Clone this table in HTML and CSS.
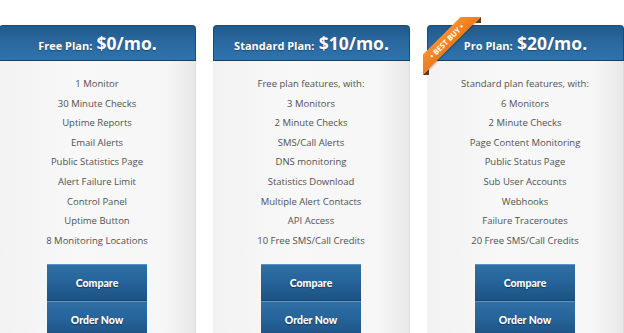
FILE: index.html
```html
<!DOCTYPE html>
<html>
<head>
<meta charset="utf-8">
<link rel="stylesheet" href="styles.css">
</head>
<body>
<div class="plans">
  <div class="plan">
    <div class="plan-head"><span class="name">Free Plan:</span> <span class="price">$0/mo.</span></div>
    <div class="plan-body">
      <ul class="features">
        <li>1 Monitor</li>
        <li>30 Minute Checks</li>
        <li>Uptime Reports</li>
        <li>Email Alerts</li>
        <li>Public Statistics Page</li>
        <li>Alert Failure Limit</li>
        <li>Control Panel</li>
        <li>Uptime Button</li>
        <li>8 Monitoring Locations</li>
      </ul>
      <div class="buttons">
        <a class="btn">Compare</a>
        <a class="btn">Order Now</a>
      </div>
    </div>
  </div>
  <div class="plan">
    <div class="plan-head"><span class="name">Standard Plan:</span> <span class="price">$10/mo.</span></div>
    <div class="plan-body">
      <ul class="features">
        <li>Free plan features, with:</li>
        <li>3 Monitors</li>
        <li>2 Minute Checks</li>
        <li>SMS/Call Alerts</li>
        <li>DNS monitoring</li>
        <li>Statistics Download</li>
        <li>Multiple Alert Contacts</li>
        <li>API Access</li>
        <li>10 Free SMS/Call Credits</li>
      </ul>
      <div class="buttons">
        <a class="btn">Compare</a>
        <a class="btn">Order Now</a>
      </div>
    </div>
  </div>
  <div class="plan">
    <div class="ribbon-wrap"><div class="ribbon">• BEST BUY •</div></div>
    <div class="plan-head"><span class="name">Pro Plan:</span> <span class="price">$20/mo.</span></div>
    <div class="plan-body">
      <ul class="features">
        <li>Standard plan features, with:</li>
        <li>6 Monitors</li>
        <li>2 Minute Checks</li>
        <li>Page Content Monitoring</li>
        <li>Public Status Page</li>
        <li>Sub User Accounts</li>
        <li>Webhooks</li>
        <li>Failure Traceroutes</li>
        <li>20 Free SMS/Call Credits</li>
      </ul>
      <div class="buttons">
        <a class="btn">Compare</a>
        <a class="btn">Order Now</a>
      </div>
    </div>
  </div>
</div>
</body>
</html>
```

FILE: styles.css
```css
html, body {
  margin: 0;
  padding: 0;
  background: #ffffff;
  overflow: hidden;
}
body {
  width: 624px;
  height: 333px;
}
.plans {
  display: flex;
  gap: 17px;
  margin-top: 25px;
  margin-left: -1px;
}
.plan {
  position: relative;
  width: 197px;
  flex: none;
}
.plan-head {
  height: 34px;
  border: 1px solid #1b4a73;
  border-bottom-color: #163f63;
  border-radius: 4px 4px 0 0;
  background: linear-gradient(to bottom, #215a8b 0%, #2a69a0 50%, #2e73ad 100%);
  color: #ffffff;
  text-align: center;
  font-family: "Open Sans", "DejaVu Sans", sans-serif;
  font-weight: 700;
  line-height: 35px;
  white-space: nowrap;
  text-shadow: 0 1px 1px rgba(0,0,0,0.35);
}
.name {
  font-size: 11px;
}
.price {
  font-size: 17.5px;
}
.plan-body {
  height: 272px;
  border-right: 1px solid #dcdcdc;
  background: linear-gradient(to right, #f2f2f2 0%, #f8f8f8 40%, #f6f6f6 85%, #e8e8e8 100%);
  padding-top: 13px;
  box-sizing: border-box;
  overflow: hidden;
}
.features {
  list-style: none;
  margin: 0;
  padding: 0;
  text-align: center;
  font-family: "Open Sans", "DejaVu Sans", sans-serif;
  font-size: 9.5px;
  line-height: 19.6px;
  color: #515151;
}
.buttons {
  margin-top: 14px;
  display: flex;
  flex-direction: column;
  align-items: center;
}
.btn {
  display: block;
  width: 100px;
  height: 37px;
  box-sizing: border-box;
  border-top: 1px solid #5b93c4;
  border-bottom: 1px solid #17466f;
  background: linear-gradient(to bottom, #2f70a5 0%, #26649a 45%, #1c5283 100%);
  color: #ffffff;
  text-align: center;
  font-family: Lato, "Open Sans", sans-serif;
  font-weight: 900;
  font-size: 10.5px;
  line-height: 36px;
  text-shadow: 0 1px 1px rgba(0,0,0,0.4);
}
.ribbon-wrap {
  position: absolute;
  top: -8px;
  left: -4px;
  width: 58px;
  height: 58px;
  overflow: hidden;
  z-index: 2;
}
.ribbon-wrap::before,
.ribbon-wrap::after {
  content: "";
  position: absolute;
  border: 3px solid #6e3a10;
  z-index: 0;
}
.ribbon-wrap::before {
  top: 0;
  right: 0;
  border-left-color: transparent;
  border-top-color: transparent;
}
.ribbon-wrap::after {
  bottom: 0;
  left: 0;
  border-left-color: transparent;
  border-top-color: transparent;
}
.ribbon {
  position: absolute;
  z-index: 1;
  left: -19px;
  top: 16.5px;
  width: 85px;
  height: 14px;
  transform: rotate(-45deg);
  background: linear-gradient(to bottom, #f5902e, #ee7a1c);
  color: #ffffff;
  text-align: center;
  font-family: "Open Sans", "DejaVu Sans", sans-serif;
  font-weight: 700;
  font-size: 7.5px;
  line-height: 14px;
  box-shadow: 0 1px 2px rgba(0,0,0,0.3);
}
```
